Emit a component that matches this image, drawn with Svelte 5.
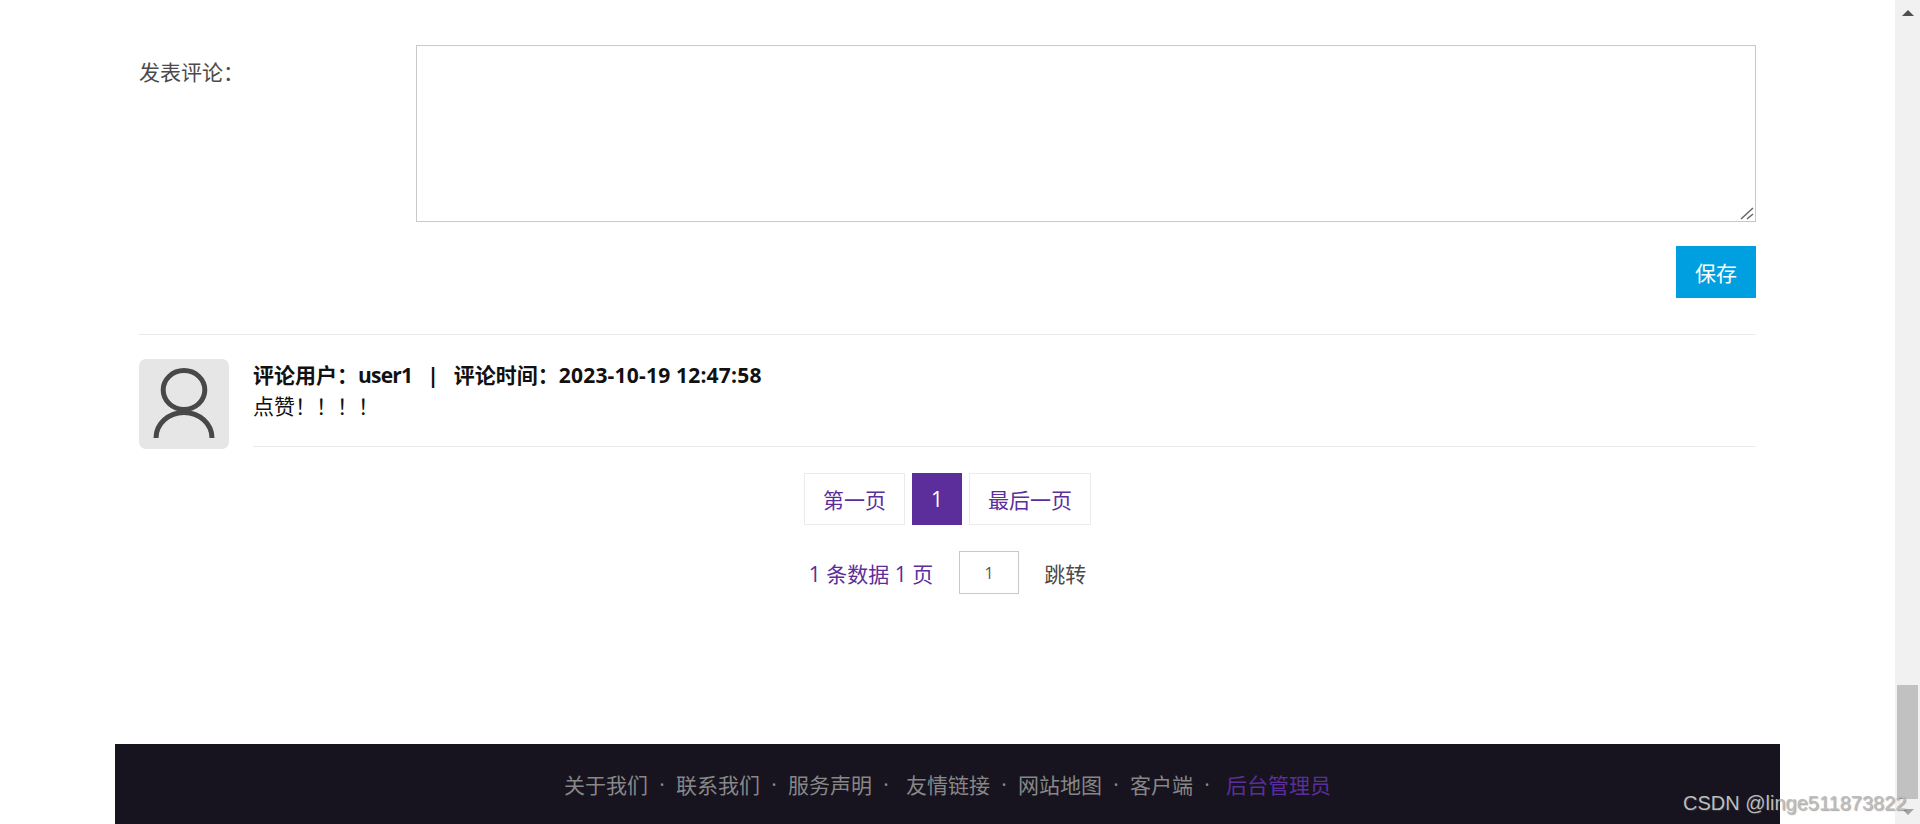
<script lang="ts">
  const footerLinks = ['关于我们', '联系我们', '服务声明', '友情链接', '网站地图', '客户端'];
  let comment = $state('');
</script>

<div class="page">
  <div class="main">
    <div class="content">
      <div class="form-row">
        <label class="form-label" for="comment">发表评论：</label>
        <div class="field">
          <textarea id="comment" bind:value={comment}></textarea>
          <svg class="grip" width="14" height="14" viewBox="0 0 14 14" fill="none">
            <path d="M1 13L13 2M7 13L13 8" stroke="#666" stroke-width="1.5" />
          </svg>
        </div>
      </div>
      <div class="save-row">
        <button class="save-btn">保存</button>
      </div>

      <div class="comment">
        <div class="avatar">
          <svg width="90" height="90" viewBox="0 0 90 90" fill="none">
            <ellipse cx="45" cy="31" rx="20.800" ry="19.500" stroke="#484848" stroke-width="5" />
            <path d="M17 79A28 25.500 0 0 1 73 79" stroke="#484848" stroke-width="5" />
          </svg>
        </div>
        <div class="comment-body">
          <div class="comment-meta">评论用户：<span class="meta-user">user1</span><span class="meta-sep">|</span>评论时间：<span class="meta-date">2023-10-19 12:47:58</span></div>
          <div class="comment-text">点赞！！！！</div>
        </div>
      </div>

      <div class="pager">
        <a class="page-link" href="#first">第一页</a>
        <span class="page-current">1</span>
        <a class="page-link" href="#last">最后一页</a>
      </div>
      <div class="jump">
        <span class="jump-info">1 条数据 1 页</span>
        <input class="jump-input" value="1" />
        <span class="jump-go">跳转</span>
      </div>
    </div>

    <footer class="footer">
      {#each footerLinks as link, i}
        <span class="foot-link">{link}</span>
        <span class="foot-dot" class:wide={i === 2} class:last={i === footerLinks.length - 1}>·</span>
      {/each}
      <span class="foot-admin">后台管理员</span>
    </footer>
  </div>

  <div class="scrollbar">
    <div class="arrow arrow-up"></div>
    <div class="track">
      <div class="thumb"></div>
    </div>
    <div class="arrow arrow-down"></div>
  </div>

  <div class="watermark">CSDN @linge511873822</div>
</div>

<style>
  :global(body) {
    margin: 0;
    background: #fff;
    font-family: "Open Sans", "Noto Sans CJK SC", sans-serif;
  }

  .page {
    position: relative;
    display: flex;
    height: 824px;
    overflow: hidden;
  }

  .main {
    flex: 1;
    display: flex;
    flex-direction: column;
    justify-content: space-between;
    min-width: 0;
  }

  .content {
    padding: 45px 139px 0;
    font-size: 21px;
  }

  .form-row {
    display: flex;
  }

  .form-label {
    width: 277px;
    flex-shrink: 0;
    color: #4a4a4a;
    line-height: 54px;
  }

  .field {
    flex: 1;
    position: relative;
  }

  textarea {
    width: 100%;
    height: 177px;
    box-sizing: border-box;
    border: 1px solid #c9c9c9;
    padding: 6px;
    margin: 0;
    outline: none;
    display: block;
    resize: none;
  }

  .grip {
    position: absolute;
    right: 2px;
    bottom: 2px;
    pointer-events: none;
  }

  .save-row {
    display: flex;
    justify-content: flex-end;
    margin-top: 24px;
    padding-bottom: 36px;
    border-bottom: 1px solid #eaeaea;
  }

  .save-btn {
    width: 80px;
    height: 52px;
    border: none;
    padding: 0;
    background: #009fdf;
    color: #fff;
    font: inherit;
  }

  .comment {
    display: flex;
    gap: 24px;
    margin-top: 24px;
  }

  .avatar {
    width: 90px;
    height: 90px;
    flex-shrink: 0;
    background: #e6e6e6;
    border-radius: 7px;
    overflow: hidden;
  }

  .avatar svg {
    display: block;
  }

  .comment-body {
    flex: 1;
    height: 88px;
    border-bottom: 1px solid #eaeaea;
    color: #111;
    line-height: 31px;
    padding-top: 1px;
    box-sizing: border-box;
  }

  .comment-meta {
    font-weight: 700;
  }

  .meta-user {
    letter-spacing: -0.8px;
  }

  .meta-sep {
    margin: 0 15px;
  }

  .meta-date {
    letter-spacing: 0.2px;
  }

  .pager {
    display: flex;
    justify-content: center;
    gap: 7px;
    margin-top: 24px;
  }

  .page-link {
    display: flex;
    align-items: center;
    height: 50px;
    padding: 0 18px;
    border: 1px solid #ebebeb;
    color: #5b2e9b;
    text-decoration: none;
  }

  .page-current {
    display: flex;
    align-items: center;
    justify-content: center;
    width: 50px;
    height: 52px;
    background: #5b2e9b;
    color: #fff;
  }

  .jump {
    display: flex;
    align-items: center;
    justify-content: center;
    margin-top: 26px;
    color: #5b2e9b;
  }

  .jump-input {
    width: 60px;
    height: 43px;
    box-sizing: border-box;
    margin: 0 25px 0 26px;
    border: 1px solid #c9c9c9;
    padding: 0;
    text-align: center;
    font: inherit;
    font-size: 16px;
    color: #555;
    outline: none;
  }

  .jump-go {
    color: #4a4a4a;
  }

  .footer {
    display: flex;
    align-items: center;
    justify-content: center;
    height: 80px;
    margin: 0 115px;
    background: #17141f;
    color: #878787;
    font-size: 21px;
  }

  .foot-dot {
    margin: 0 10px;
    width: 8px;
    text-align: center;
  }

  .foot-dot.wide {
    margin-right: 16px;
  }

  .foot-dot.last {
    margin-right: 15px;
  }

  .foot-admin {
    color: #5b2e9b;
  }

  .scrollbar {
    width: 25px;
    flex-shrink: 0;
    display: flex;
    flex-direction: column;
    background: #f1f1f1;
  }

  .track {
    flex: 1;
    position: relative;
  }

  .thumb {
    position: absolute;
    left: 2px;
    right: 2px;
    bottom: 0;
    height: 114px;
    background: #c1c1c1;
  }

  .arrow {
    height: 25px;
    display: flex;
    align-items: center;
    justify-content: center;
  }

  .arrow::before {
    content: "";
    border-left: 6px solid transparent;
    border-right: 6px solid transparent;
  }

  .arrow-up::before {
    border-bottom: 6px solid #505050;
  }

  .arrow-down::before {
    border-top: 6px solid #a3a3a3;
  }

  .watermark {
    position: absolute;
    left: 1683px;
    top: 791px;
    font-family: "Liberation Sans", sans-serif;
    font-size: 20px;
    line-height: 24px;
    color: #bdbdbd;
    text-shadow: 1px 1px 1px rgba(80, 80, 80, 0.5);
    white-space: nowrap;
  }
</style>
